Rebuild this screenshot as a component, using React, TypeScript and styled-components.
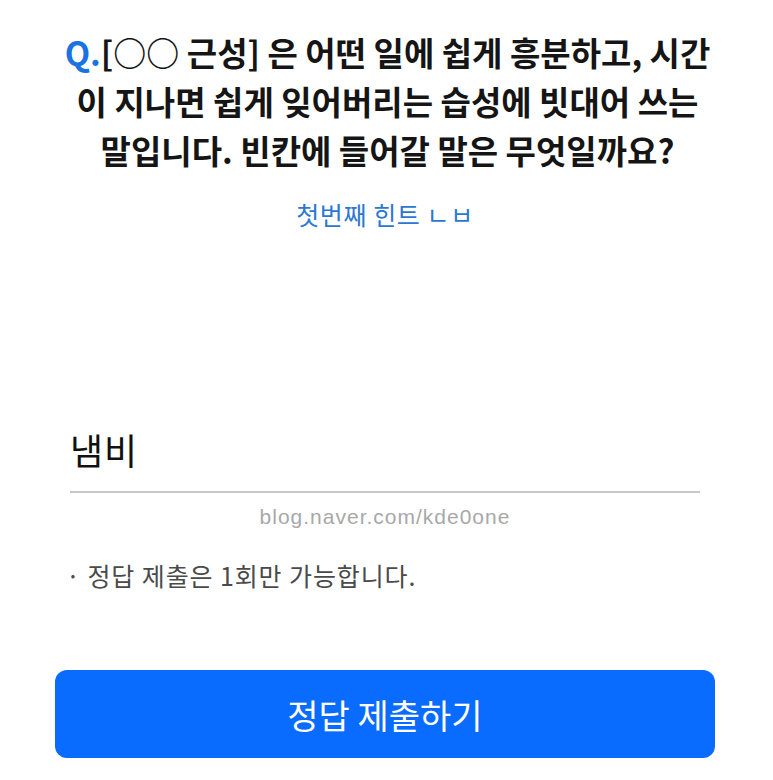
import styled, { createGlobalStyle } from 'styled-components';

const GlobalStyle = createGlobalStyle`
  html, body {
    margin: 0;
    padding: 0;
    background: #ffffff;
  }

  body {
    font-family: 'Noto Sans CJK KR', 'Noto Sans', sans-serif;
  }
`;

export default function App() {
  return (
    <>
      <GlobalStyle />
      <Page>
        <Question>
          <QMark>Q.</QMark>[○○ 근성] 은 어떤 일에 쉽게 흥분하고, 시간
          <br />이 지나면 쉽게 잊어버리는 습성에 빗대어 쓰는
          <br />말입니다. 빈칸에 들어갈 말은 무엇일까요?
        </Question>
        <HintLink>첫번째 힌트 ㄴㅂ</HintLink>
        <AnswerField>냄비</AnswerField>
        <Watermark>blog.naver.com/kde0one</Watermark>
        <Notice>· 정답 제출은 1회만 가능합니다.</Notice>
        <SubmitButton>정답 제출하기</SubmitButton>
      </Page>
    </>
  );
}

const Page = styled.main`
  display: flex;
  flex-direction: column;
  padding: 28px 58px 22px 55px;
`;

const Question = styled.h1`
  margin: 0 -20px 0 -15px;
  font-size: 33px;
  line-height: 49px;
  font-weight: 700;
  color: #151515;
  text-align: center;
  letter-spacing: 0;
`;

const QMark = styled.span`
  color: #1a73e0;
`;

const HintLink = styled.div`
  margin-top: 24px;
  font-size: 25px;
  line-height: 30px;
  color: #2a78d2;
  text-align: center;
  letter-spacing: 0.6px;
`;

const AnswerField = styled.div`
  margin: 190px 15px 0 15px;
  padding: 10px 0 22px 0;
  font-size: 36px;
  line-height: 40px;
  color: #111111;
  letter-spacing: 1px;
  border-bottom: 2px solid #c8c8c8;
`;

const Watermark = styled.div`
  margin-top: 12px;
  font-family: 'Liberation Sans', sans-serif;
  font-size: 21px;
  line-height: 24px;
  color: #a8a8a8;
  text-align: center;
  letter-spacing: 1px;
`;

const Notice = styled.p`
  margin: 31px 0 0 11px;
  font-size: 25px;
  line-height: 30px;
  color: #4a4a4a;
  letter-spacing: 0.9px;
`;

const SubmitButton = styled.button`
  margin-top: 80px;
  height: 88px;
  border: none;
  border-radius: 12px;
  background: #0a6cff;
  color: #ffffff;
  font-family: 'Noto Sans CJK KR', 'Noto Sans', sans-serif;
  font-size: 34px;
  cursor: pointer;
`;
